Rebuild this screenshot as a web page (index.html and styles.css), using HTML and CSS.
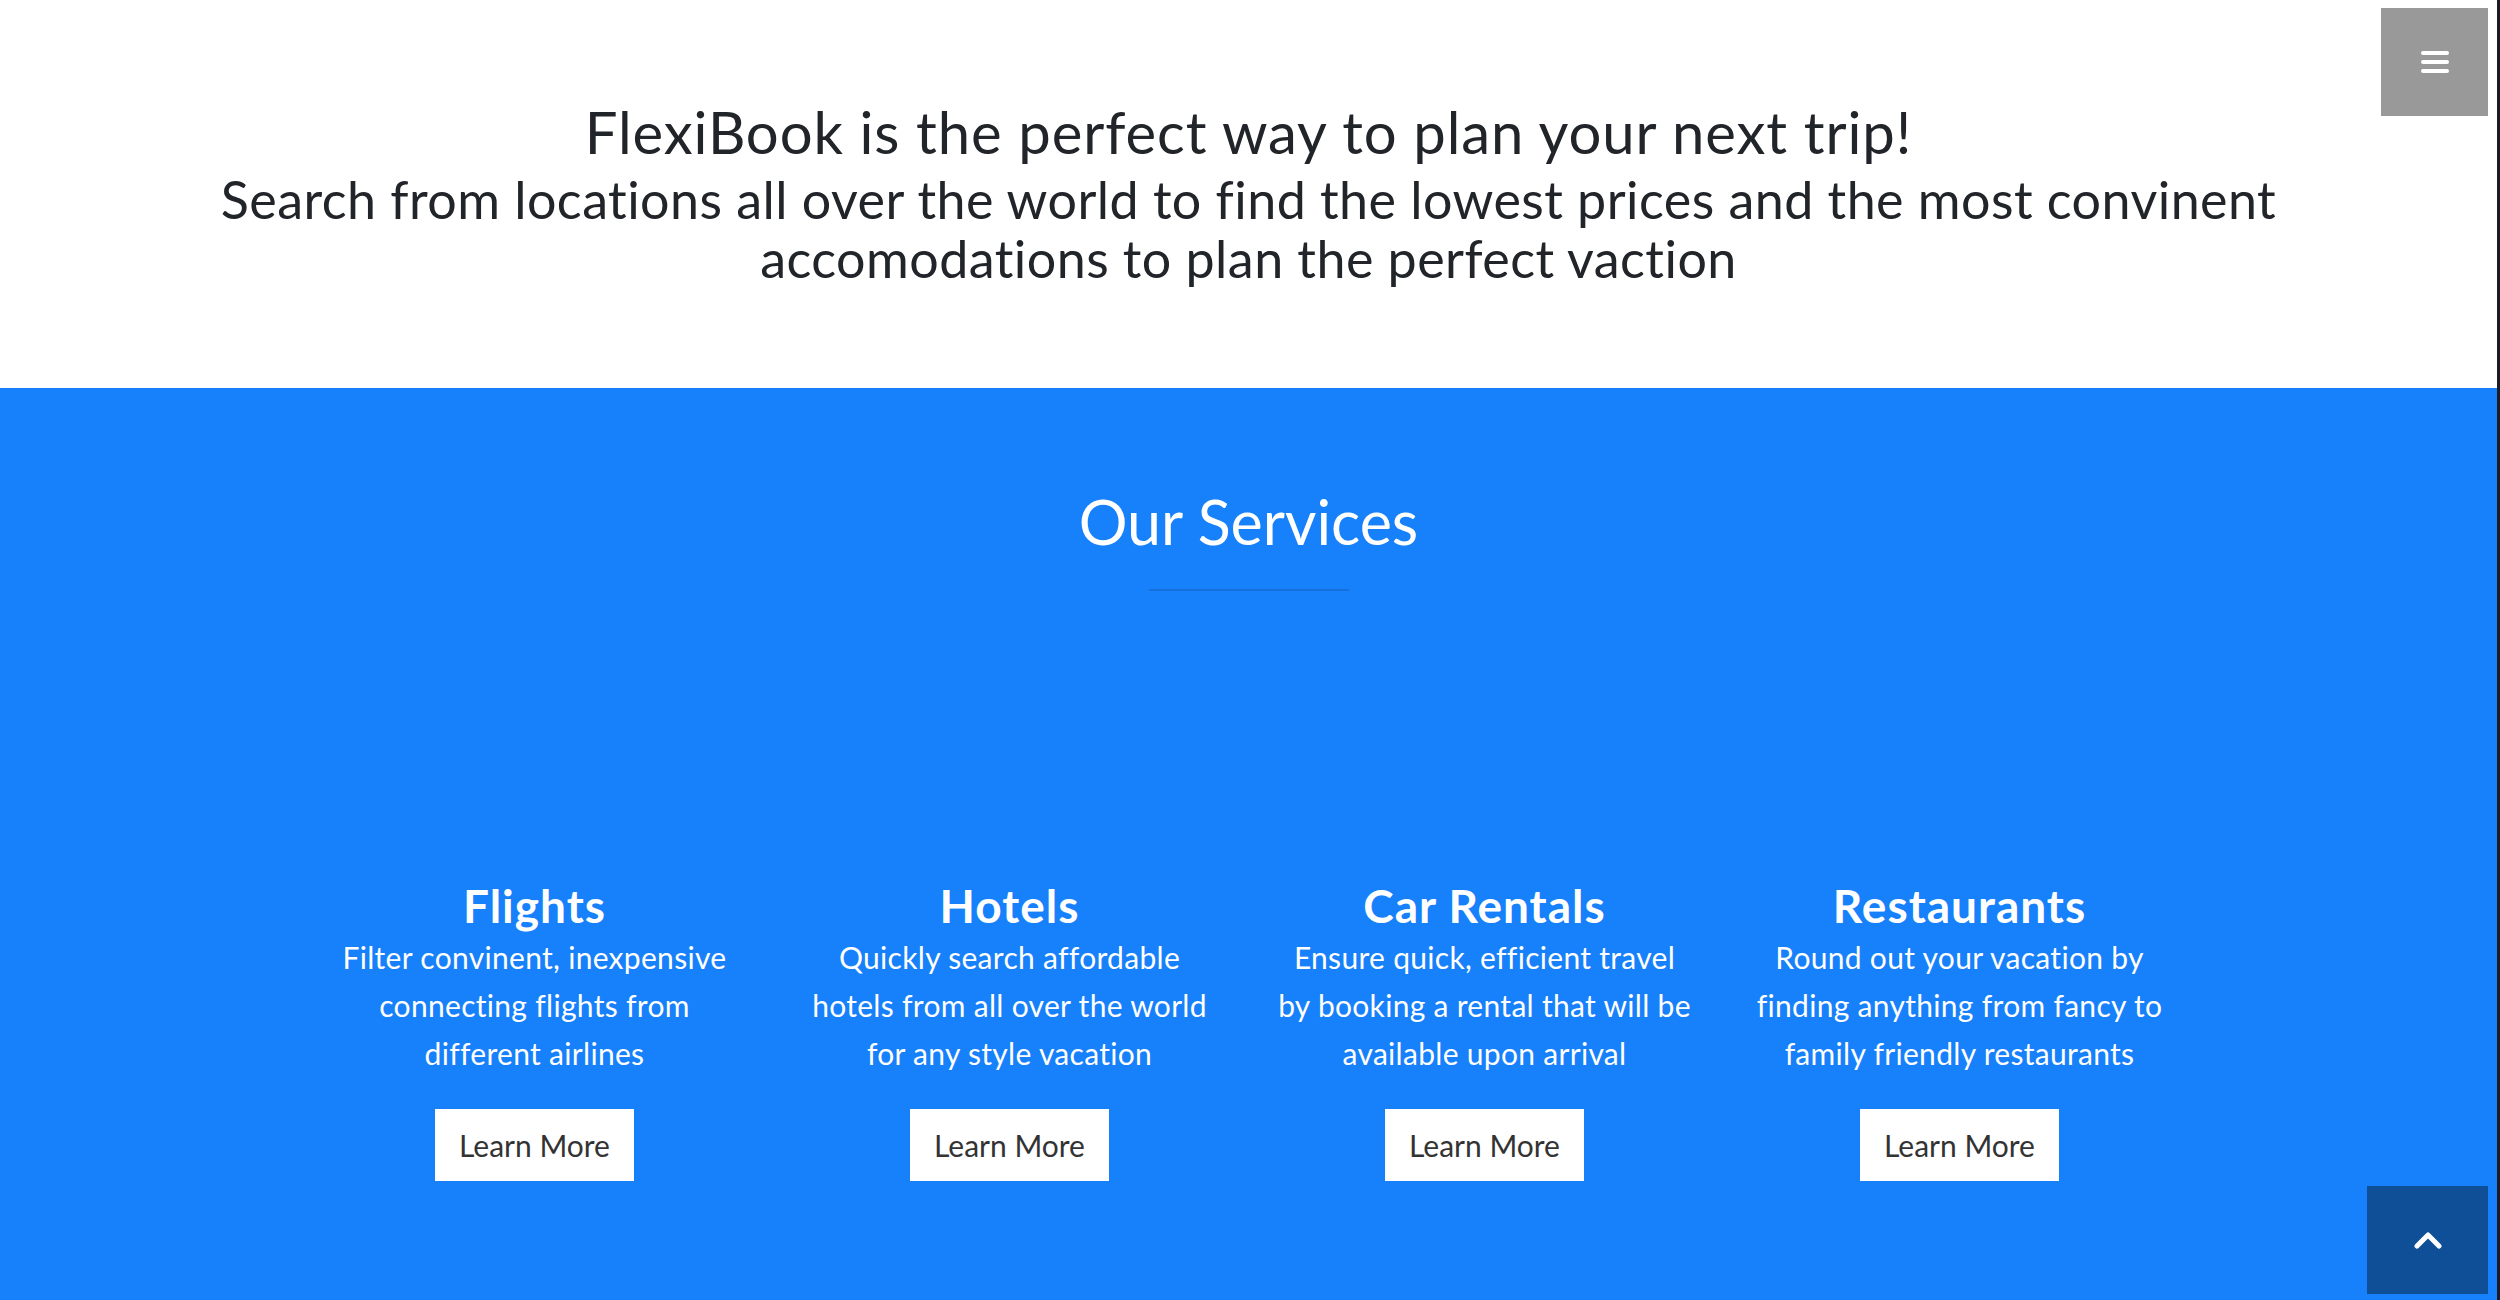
FILE: index.html
```html
<!DOCTYPE html>
<html lang="en">
<head>
    <meta charset="UTF-8">
    <meta name="viewport" content="width=device-width, initial-scale=1.0">
    <title>FlexiBook</title>
    <link rel="stylesheet" href="styles.css">
</head>
<body>
    <button class="menu-btn" aria-label="menu">
        <span class="bar"></span>
        <span class="bar"></span>
        <span class="bar"></span>
    </button>

    <header class="hero">
        <h1 class="hero-title">FlexiBook is the perfect way to plan your next trip!</h1>
        <p class="hero-sub">Search from locations all over the world to find the lowest prices and the most convinent<br>accomodations to plan the perfect vaction</p>
    </header>

    <section class="services">
        <h2 class="services-title">Our Services</h2>
        <hr class="divider">

        <div class="service-row">
            <div class="service">
                <h3>Flights</h3>
                <p>Filter convinent, inexpensive<br>connecting flights from<br>different airlines</p>
                <a href="#" class="learn-btn">Learn More</a>
            </div>
            <div class="service">
                <h3>Hotels</h3>
                <p>Quickly search affordable<br>hotels from all over the world<br>for any style vacation</p>
                <a href="#" class="learn-btn">Learn More</a>
            </div>
            <div class="service">
                <h3>Car Rentals</h3>
                <p>Ensure quick, efficient travel<br>by booking a rental that will be<br>available upon arrival</p>
                <a href="#" class="learn-btn">Learn More</a>
            </div>
            <div class="service">
                <h3>Restaurants</h3>
                <p>Round out your vacation by<br>finding anything from fancy to<br>family friendly restaurants</p>
                <a href="#" class="learn-btn">Learn More</a>
            </div>
        </div>
    </section>

    <!-- back to top -->
    <a href="#" class="top-btn" aria-label="back to top">
        <svg width="28" height="18" viewBox="0 0 28 18">
            <polyline points="3,15 14,4 25,15" fill="none" stroke="#fff" stroke-width="5" stroke-linecap="round" stroke-linejoin="round"/>
        </svg>
    </a>
</body>
</html>
```

FILE: styles.css
```css
body {
  margin: 0;
  font-family: Lato, "Open Sans", sans-serif;
  color: #212529;
  border-right: 3px solid #1c1a22;
}

/* menu button top right */
.menu-btn {
  position: fixed;
  top: 8px;
  right: 12px;
  width: 107px;
  height: 108px;
  padding: 0;
  border: 0;
  background: #999;
  display: flex;
  flex-direction: column;
  align-items: center;
  justify-content: center;
  gap: 5px;
}
.menu-btn .bar {
  display: block;
  width: 28px;
  height: 4px;
  border-radius: 2px;
  background: #fff;
}

/* hero */
.hero {
  text-align: center;
  padding: 98px 0 100px;
  background: #fff;
}
.hero-title {
  margin: 0;
  font-size: 58px;
  font-weight: 400;
  line-height: 67px;
  letter-spacing: 0.9px;
}
.hero-sub {
  margin: 5px 0 0;
  font-size: 52px;
  line-height: 59px;
  letter-spacing: 0.45px;
}

/* services */
.services {
  background: #1780fb;
  color: #fff;
  text-align: center;
  padding: 94px 0 140px;
}
.services-title {
  margin: 0;
  font-size: 61px;
  font-weight: 400;
  line-height: 80px;
}
.divider {
  width: 200px;
  height: 2px;
  border: 0;
  background: #1670d9;
  margin: 27px auto 287px;
}
.service-row {
  display: flex;
  justify-content: center;
  padding-right: 3px;
}
.service {
  width: 475px;
  padding: 0 30px;
  box-sizing: border-box;
  display: flex;
  flex-direction: column;
  align-items: center;
}
.service h3 {
  margin: 0;
  font-size: 46px;
  font-weight: 700;
  line-height: 56px;
  letter-spacing: 1px;
}
.service p {
  margin: -1px 0 0;
  font-size: 30px;
  line-height: 48px;
  letter-spacing: 0.3px;
}
.learn-btn {
  margin-top: 32px;
  height: 72px;
  line-height: 72px;
  padding: 0 24px;
  background: #fff;
  color: #333;
  font-size: 30px;
  text-decoration: none;
}

.top-btn {
  position: fixed;
  right: 12px;
  bottom: 6px;
  width: 121px;
  height: 108px;
  background: #0e4f97;
  display: flex;
  align-items: center;
  justify-content: center;
}
```
